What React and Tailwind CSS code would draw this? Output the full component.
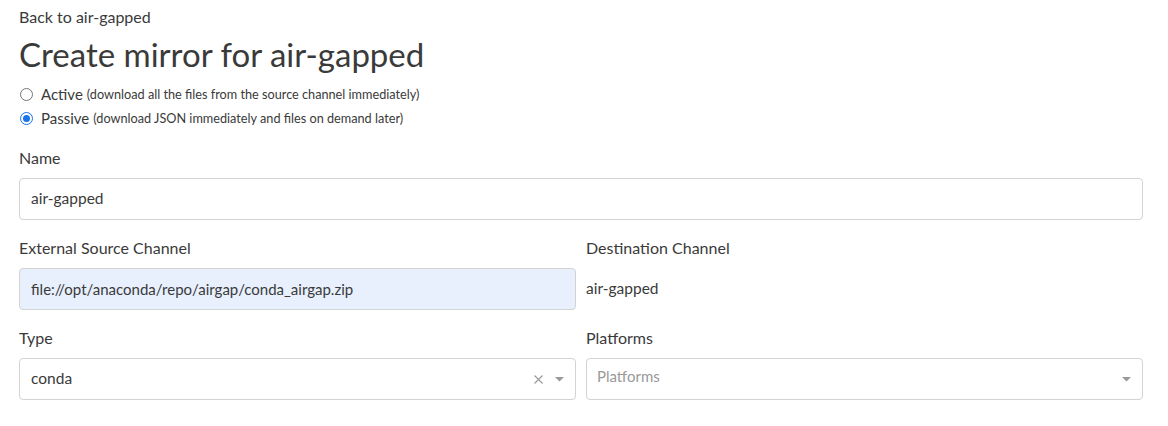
import React, { useState } from 'react';

const font = { fontFamily: 'Lato, "Open Sans", sans-serif' };

function Caret() {
  return (
    <svg width="9" height="5" viewBox="0 0 9 5" className="text-[#999]">
      <path d="M0 0 L9 0 L4.5 4.5 Z" fill="currentColor" />
    </svg>
  );
}

function Clear() {
  return (
    <svg width="9" height="9" viewBox="0 0 9 9" className="text-[#999] mr-[12px]">
      <path d="M0.5 0.5 L8.5 8.5 M8.5 0.5 L0.5 8.5" stroke="currentColor" strokeWidth="1.1" />
    </svg>
  );
}

function Radio({ checked, label, hint, onChange }) {
  return (
    <label className="flex items-center h-6 cursor-pointer">
      <span
        className={`w-[13px] h-[13px] rounded-full border flex items-center justify-center mr-2 ml-[1px] ${
          checked ? 'border-[#1a73e8] bg-white' : 'border-[#767676] bg-white'
        }`}
        onClick={onChange}
      >
        {checked && <span className="w-[7px] h-[7px] rounded-full bg-[#1a73e8]" />}
      </span>
      <span className="text-[15px]">{label}</span>
      <span className="text-[12.7px] ml-1 mt-[2px]">{hint}</span>
    </label>
  );
}

export default function App() {
  const [mode, setMode] = useState('passive');

  return (
    <div className="bg-white min-h-screen px-[19px] pt-[7px] text-[#3a3a3a]" style={font}>
      <a className="text-[16px] block leading-5">Back to air-gapped</a>
      <h1 className="text-[33px] leading-[40px] mt-[7px]">Create mirror for air-gapped</h1>

      <div className="mt-[8px] flex flex-col">
        <Radio
          checked={mode === 'active'}
          label="Active"
          hint="(download all the files from the source channel immediately)"
          onChange={() => setMode('active')}
        />
        <Radio
          checked={mode === 'passive'}
          label="Passive"
          hint="(download JSON immediately and files on demand later)"
          onChange={() => setMode('passive')}
        />
      </div>

      <div className="w-[1124px] mt-[18px]">
        <div className="text-[16px] leading-5">Name</div>
        <div className="mt-[10px] h-[42px] border border-[#d3d3d3] rounded-[4px] flex items-center px-[11px] text-[15.5px]">
          air-gapped
        </div>

        <div className="grid grid-cols-2 gap-x-[10px] mt-[18px]">
          <div>
            <div className="text-[16px] leading-5">External Source Channel</div>
            <div className="mt-[10px] h-[42px] border border-[#d3d3d3] rounded-[4px] bg-[#e8f0fe] flex items-center px-[11px] text-[15px]">
              file://opt/anaconda/repo/airgap/conda_airgap.zip
            </div>
          </div>
          <div>
            <div className="text-[16px] leading-5">Destination Channel</div>
            <div className="mt-[10px] h-[42px] flex items-center text-[15.5px]">air-gapped</div>
          </div>

          <div className="mt-[18px]">
            <div className="text-[16px] leading-5">Type</div>
            <div className="mt-[10px] h-[42px] border border-[#d3d3d3] rounded-[4px] flex items-center pl-[11px] pr-[11px] text-[15.5px]">
              <span className="flex-1">conda</span>
              <Clear />
              <Caret />
            </div>
          </div>
          <div className="mt-[18px]">
            <div className="text-[16px] leading-5">Platforms</div>
            <div className="mt-[10px] h-[42px] border border-[#d3d3d3] rounded-[4px] flex items-center pl-[10px] pr-[11px] text-[15px]">
              <span className="flex-1 text-[#999] -mt-[6px]">Platforms</span>
              <Caret />
            </div>
          </div>
        </div>
      </div>
    </div>
  );
}
